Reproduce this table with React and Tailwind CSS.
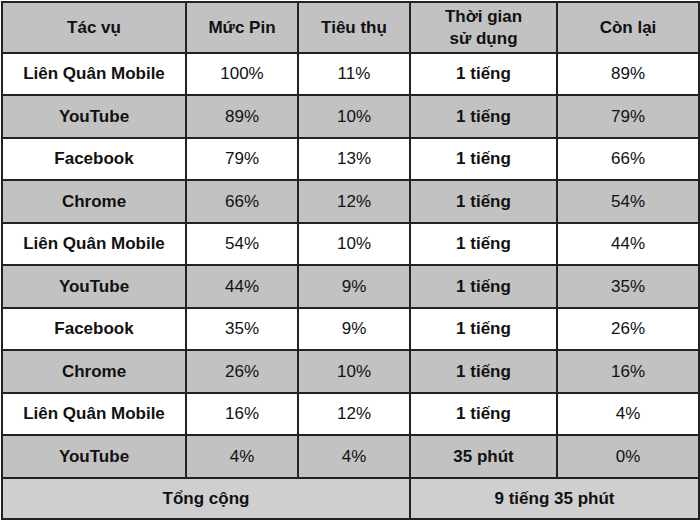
import React from "react";

const rows = [
  { app: "Liên Quân Mobile", pin: "100%", use: "11%", time: "1 tiếng", left: "89%" },
  { app: "YouTube", pin: "89%", use: "10%", time: "1 tiếng", left: "79%" },
  { app: "Facebook", pin: "79%", use: "13%", time: "1 tiếng", left: "66%" },
  { app: "Chrome", pin: "66%", use: "12%", time: "1 tiếng", left: "54%" },
  { app: "Liên Quân Mobile", pin: "54%", use: "10%", time: "1 tiếng", left: "44%" },
  { app: "YouTube", pin: "44%", use: "9%", time: "1 tiếng", left: "35%" },
  { app: "Facebook", pin: "35%", use: "9%", time: "1 tiếng", left: "26%" },
  { app: "Chrome", pin: "26%", use: "10%", time: "1 tiếng", left: "16%" },
  { app: "Liên Quân Mobile", pin: "16%", use: "12%", time: "1 tiếng", left: "4%" },
  { app: "YouTube", pin: "4%", use: "4%", time: "35 phút", left: "0%" },
];

const cell = "border-2 border-[#222222] text-center align-middle p-0";

export default function App() {
  return (
    <div className="bg-white w-[700px] h-[521px] pl-px pt-px font-['Liberation_Sans',Arial,sans-serif] text-[17px] text-[#111111]">
      <table className="border-collapse w-[697px] table-fixed">
        <colgroup>
          <col className="w-[184px]" />
          <col className="w-[112px]" />
          <col className="w-[112px]" />
          <col className="w-[147px]" />
          <col className="w-[142px]" />
        </colgroup>
        <thead>
          <tr className="h-[51px] bg-[#c2c2c2] font-bold">
            <th className={cell}>Tác vụ</th>
            <th className={cell}>Mức Pin</th>
            <th className={cell}>Tiêu thụ</th>
            <th className={`${cell} leading-[22px]`}>
              Thời gian
              <br />
              sử dụng
            </th>
            <th className={cell}>Còn lại</th>
          </tr>
        </thead>
        <tbody>
          {rows.map((r, i) => (
            <tr
              key={i}
              className={`${i % 2 === 0 ? "bg-white h-[42px]" : "bg-[#c2c2c2] h-[43px]"}`}
            >
              <td className={`${cell} font-bold`}>{r.app}</td>
              <td className={cell}>{r.pin}</td>
              <td className={cell}>{r.use}</td>
              <td className={`${cell} font-bold`}>{r.time}</td>
              <td className={cell}>{r.left}</td>
            </tr>
          ))}
          <tr className="h-[41px] bg-[#cfcfcf] font-bold">
            <td colSpan="3" className={cell}>
              Tổng cộng
            </td>
            <td colSpan="2" className={cell}>
              9 tiếng 35 phút
            </td>
          </tr>
        </tbody>
      </table>
    </div>
  );
}
